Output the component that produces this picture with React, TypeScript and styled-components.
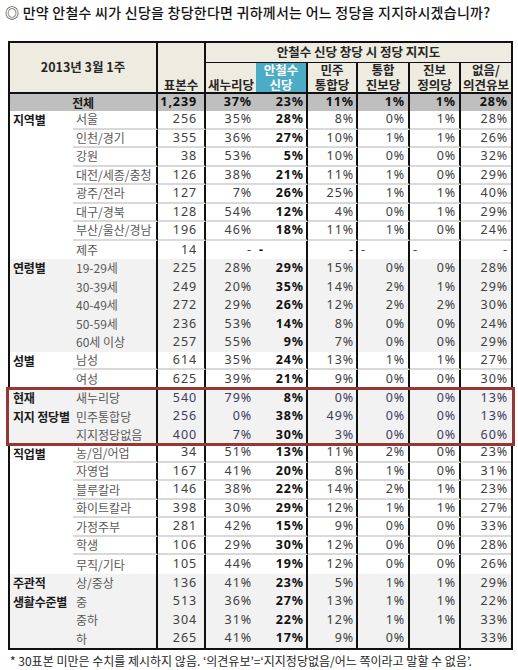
import React from 'react';
import styled, { createGlobalStyle } from 'styled-components';

const GlobalStyle = createGlobalStyle`
  html, body { margin: 0; padding: 0; background: #ffffff; }
  body { font-family: "Noto Sans", "Noto Sans CJK KR", sans-serif; }
  * { box-sizing: border-box; }
`;

const COLS = '63px 85px 48px 50px 52px 50px 52px 51px 50px';
const LINE = '2px solid #111';
const LINE_AFTER = [false, true, true, false, true, true, true, true, false];

const Page = styled.div`
  width: 518px;
  height: 670px;
  display: flex;
  flex-direction: column;
  padding-top: 3px;
`;

const Title = styled.div`
  padding-left: 5px;
  font-family: "Noto Sans CJK KR", sans-serif;
  font-size: 14px;
  font-weight: 500;
  line-height: 18px;
  color: #141414;
  letter-spacing: 0.25px;
  white-space: nowrap;
`;

const Table = styled.div`
  margin: 20px 0 0 8px;
  width: 505px;
  border: ${LINE};
  display: flex;
  flex-direction: column;
  font-family: "Noto Sans", "Noto Sans CJK KR", sans-serif;
`;

const Header = styled.div`
  display: grid;
  grid-template-columns: ${COLS};
  grid-template-rows: 20px 29px;
  background: #eeece1;
  border-bottom: ${LINE};
  font-family: "Noto Sans CJK KR", sans-serif;
  font-weight: 700;
  font-size: 12.5px;
  color: #262626;
`;

const HeadCell = styled.div<{ $col: string; $row: string; $line?: boolean; $valign?: 'center' | 'end'; $under?: boolean; $hi?: boolean }>`
  grid-column: ${(p) => p.$col};
  grid-row: ${(p) => p.$row};
  display: flex;
  flex-direction: column;
  align-items: center;
  justify-content: ${(p) => (p.$valign === 'end' ? 'flex-end' : 'center')};
  text-align: center;
  line-height: 14.5px;
  border-right: ${(p) => (p.$line ? LINE : 'none')};
  border-bottom: ${(p) => (p.$under ? '1px solid #111' : 'none')};
  background: ${(p) => (p.$hi ? '#4bacc6' : 'transparent')};
  color: ${(p) => (p.$hi ? '#ffffff' : 'inherit')};
  white-space: nowrap;
`;

const TotalRow = styled.div`
  display: grid;
  grid-template-columns: ${COLS};
  height: 17px;
  background: #bfbfbf;
  font-weight: 700;
  color: #111;
`;

const Group = styled.div<{ $gray?: boolean; $boxed?: boolean }>`
  display: flex;
  flex-direction: column;
  background: ${(p) => (p.$gray ? '#f2f2f2' : '#ffffff')};
  outline: ${(p) => (p.$boxed ? '3px solid #953735' : 'none')};
  outline-offset: -1px;
  margin: 0 ${(p) => (p.$boxed ? '-2px' : '0')};
  padding: 0 ${(p) => (p.$boxed ? '2px' : '0')};
  position: relative;
  z-index: ${(p) => (p.$boxed ? 1 : 0)};
`;

const Row = styled.div`
  display: grid;
  grid-template-columns: ${COLS};
  height: 18.52px;
`;

const Cell = styled.div<{ $align: 'left' | 'right' | 'center'; $line?: boolean; $sep?: boolean; $bold?: boolean; $tone?: string; $pr?: number }>`
  display: flex;
  align-items: center;
  justify-content: ${(p) => (p.$align === 'left' ? 'flex-start' : p.$align === 'right' ? 'flex-end' : 'center')};
  padding: 0 ${(p) => p.$pr ?? 3}px 0 3px;
  border-right: ${(p) => (p.$line ? LINE : 'none')};
  border-bottom: ${(p) => (p.$sep ? '2px solid #d9d9d9' : 'none')};
  font-size: 12.5px;
  font-weight: ${(p) => (p.$bold ? 700 : 400)};
  color: ${(p) => p.$tone ?? '#404040'};
  letter-spacing: ${(p) => (p.$align === 'right' ? '0.9px' : '0')};
  white-space: nowrap;
  line-height: 1;
`;

const CatText = styled.span`
  font-family: "Noto Sans CJK KR", sans-serif;
  font-weight: 700;
  font-size: 12px;
  color: #1a1a1a;
  letter-spacing: -0.2px;
`;

const LabelText = styled.span`
  font-family: "Noto Sans CJK KR", "Noto Sans", sans-serif;
  font-size: 12px;
  color: #595959;
`;

const Dash = styled.span<{ $side: 'left' | 'right' }>`
  flex: 1;
  text-align: ${(p) => p.$side};
`;

const Footer = styled.div`
  margin-top: 3px;
  padding-left: 10px;
  font-family: "Noto Sans CJK KR", sans-serif;
  font-size: 12px;
  line-height: 15px;
  color: #262626;
  white-space: nowrap;
`;

type DataRow = { cat?: string; label: string; n: string; v: (string | number)[] };
type GroupData = { gray?: boolean; boxed?: boolean; sep?: boolean; tone?: string; rows: DataRow[] };

const groups: GroupData[] = [
  {
    sep: true,
    rows: [
      { cat: '지역별', label: '서울', n: '256', v: [35, 28, 8, 0, 1, 28] },
      { label: '인천/경기', n: '355', v: [36, 27, 10, 1, 1, 26] },
      { label: '강원', n: '38', v: [53, 5, 10, 0, 0, 32] },
      { label: '대전/세종/충청', n: '126', v: [38, 21, 11, 1, 0, 29] },
      { label: '광주/전라', n: '127', v: [7, 26, 25, 1, 1, 40] },
      { label: '대구/경북', n: '128', v: [54, 12, 4, 0, 1, 29] },
      { label: '부산/울산/경남', n: '196', v: [46, 18, 11, 1, 0, 24] },
      { label: '제주', n: '14', v: ['-r', '-l', '-r', '-l', '-l', '-r'] },
    ],
  },
  {
    gray: true,
    rows: [
      { cat: '연령별', label: '19-29세', n: '225', v: [28, 29, 15, 0, 0, 28] },
      { label: '30-39세', n: '249', v: [20, 35, 14, 2, 1, 29] },
      { label: '40-49세', n: '272', v: [29, 26, 12, 2, 2, 30] },
      { label: '50-59세', n: '236', v: [53, 14, 8, 0, 0, 24] },
      { label: '60세 이상', n: '257', v: [55, 9, 7, 0, 0, 29] },
    ],
  },
  {
    sep: true,
    rows: [
      { cat: '성별', label: '남성', n: '614', v: [35, 24, 13, 1, 1, 27] },
      { label: '여성', n: '625', v: [39, 21, 9, 0, 0, 30] },
    ],
  },
  {
    gray: true,
    boxed: true,
    tone: '#3b3b5e',
    rows: [
      { cat: '현재', label: '새누리당', n: '540', v: [79, 8, 0, 0, 0, 13] },
      { cat: '지지 정당별', label: '민주통합당', n: '256', v: [0, 38, 49, 0, 0, 13] },
      { label: '지지정당없음', n: '400', v: [7, 30, 3, 0, 0, 60] },
    ],
  },
  {
    sep: true,
    rows: [
      { cat: '직업별', label: '농/임/어업', n: '34', v: [51, 13, 11, 2, 0, 23] },
      { label: '자영업', n: '167', v: [41, 20, 8, 1, 0, 31] },
      { label: '블루칼라', n: '146', v: [38, 22, 14, 2, 1, 23] },
      { label: '화이트칼라', n: '398', v: [30, 29, 12, 1, 1, 27] },
      { label: '가정주부', n: '281', v: [42, 15, 9, 0, 0, 33] },
      { label: '학생', n: '106', v: [29, 30, 12, 0, 0, 28] },
      { label: '무직/기타', n: '105', v: [44, 19, 12, 0, 0, 26] },
    ],
  },
  {
    gray: true,
    rows: [
      { cat: '주관적', label: '상/중상', n: '136', v: [41, 23, 5, 1, 1, 29] },
      { cat: '생활수준별', label: '중', n: '513', v: [36, 27, 13, 1, 1, 22] },
      { label: '중하', n: '304', v: [31, 22, 12, 1, 1, 33] },
      { label: '하', n: '265', v: [41, 17, 9, 0, '', 33] },
    ],
  },
];

const valuePad = [4, 2, 2, 3, 3, 3];

function renderValue(val: string | number) {
  if (typeof val === 'number') return `${val}%`;
  if (val === '-r') return <Dash $side="right">-</Dash>;
  if (val === '-l') return <Dash $side="left">-</Dash>;
  return val;
}

export default function App() {
  return (
    <>
      <GlobalStyle />
      <Page>
        <Title>◎ 만약 안철수 씨가 신당을 창당한다면 귀하께서는 어느 정당을 지지하시겠습니까?</Title>
        <Table>
          <Header>
            <HeadCell $col="1 / 3" $row="1 / 3" $line>2013년 3월 1주</HeadCell>
            <HeadCell $col="3" $row="1 / 3" $line $valign="end">표본수</HeadCell>
            <HeadCell $col="4 / 10" $row="1" $under>안철수 신당 창당 시 정당 지지도</HeadCell>
            <HeadCell $col="4" $row="2" $valign="end">새누리당</HeadCell>
            <HeadCell $col="5" $row="2" $line $hi>
              <span>안철수</span>
              <span>신당</span>
            </HeadCell>
            <HeadCell $col="6" $row="2" $line $valign="end">
              <span>민주</span>
              <span>통합당</span>
            </HeadCell>
            <HeadCell $col="7" $row="2" $line $valign="end">
              <span>통합</span>
              <span>진보당</span>
            </HeadCell>
            <HeadCell $col="8" $row="2" $line $valign="end">
              <span>진보</span>
              <span>정의당</span>
            </HeadCell>
            <HeadCell $col="9" $row="2" $valign="end">
              <span>없음/</span>
              <span>의견유보</span>
            </HeadCell>
          </Header>
          <TotalRow>
            <Cell $align="center" $line $tone="#111" style={{ gridColumn: '1 / 3' }}>
              <CatText>전체</CatText>
            </Cell>
            <Cell $align="right" $line $bold $tone="#111" $pr={7}>1,239</Cell>
            {[37, 23, 11, 1, 1, 28].map((v, i) => (
              <Cell key={i} $align="right" $bold $tone="#111" $line={LINE_AFTER[i + 3]} $pr={valuePad[i]}>
                {v}%
              </Cell>
            ))}
          </TotalRow>
          {groups.map((g, gi) => (
            <Group key={gi} $gray={g.gray} $boxed={g.boxed}>
              {g.rows.map((r, ri) => {
                const sep = !!g.sep && ri < g.rows.length - 1;
                return (
                  <Row key={ri}>
                    <Cell $align="left">{r.cat ? <CatText>{r.cat}</CatText> : null}</Cell>
                    <Cell $align="left" $line $sep={sep}>
                      <LabelText>{r.label}</LabelText>
                    </Cell>
                    <Cell $align="right" $line $sep={sep} $pr={7} $tone={g.tone}>
                      {r.n}
                    </Cell>
                    {r.v.map((v, i) => (
                      <Cell
                        key={i}
                        $align="right"
                        $sep={sep}
                        $line={LINE_AFTER[i + 3]}
                        $bold={i === 1}
                        $tone={i === 1 ? '#111' : g.tone}
                        $pr={valuePad[i]}
                      >
                        {renderValue(v)}
                      </Cell>
                    ))}
                  </Row>
                );
              })}
            </Group>
          ))}
        </Table>
        <Footer>* 30표본 미만은 수치를 제시하지 않음. ‘의견유보’=‘지지정당없음/어느 쪽이라고 말할 수 없음’.</Footer>
      </Page>
    </>
  );
}
